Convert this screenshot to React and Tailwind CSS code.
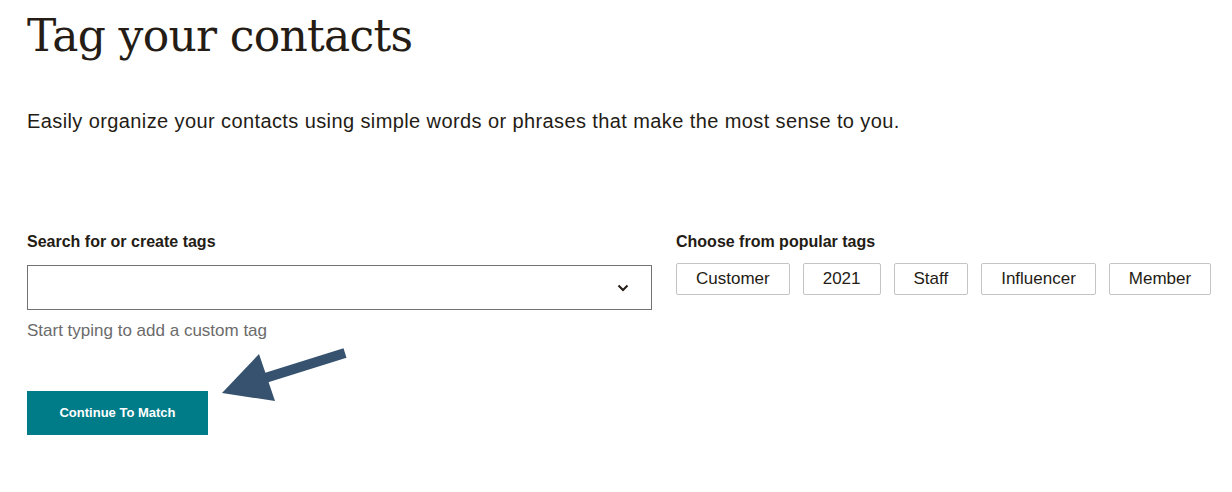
import React from 'react';

const tags = ['Customer', '2021', 'Staff', 'Influencer', 'Member'];

const ArrowNote = () => (
  <svg className="absolute left-0 top-0 pointer-events-none" width="400" height="450" viewBox="0 0 400 450">
    <line x1="345" y1="353" x2="262" y2="379" stroke="#36526e" strokeWidth="10" />
    <polygon points="222,393 259,354 275,401" fill="#36526e" />
  </svg>
);

export default function App() {
  return (
    <div className="relative w-[1232px] h-[492px] bg-white text-[#241c15] px-[27px] pt-[6px] font-['Liberation_Sans',sans-serif]">
      <h1 className="font-['DejaVu_Serif',serif] text-[44px] leading-[60px] tracking-[-0.7px]">Tag your contacts</h1>
      <p className="mt-[41px] text-[20px] leading-[28px] tracking-[0.4px]">
        Easily organize your contacts using simple words or phrases that make the most sense to you.
      </p>

      <div className="mt-[97px] flex gap-6">
        <div className="w-[625px] shrink-0">
          <label className="block text-[16px] font-bold leading-[20px]">Search for or create tags</label>
          <div className="mt-[13px] h-[45px] border border-[#727272] flex items-center justify-end pr-[22px]">
            <svg width="12" height="8" viewBox="0 0 12 8" fill="none">
              <path d="M1.5 1.5 L6 6 L10.5 1.5" stroke="#241c15" strokeWidth="2" />
            </svg>
          </div>
          <p className="mt-[10px] text-[17px] leading-[22px] text-[#6b6b6b]">Start typing to add a custom tag</p>
          <button className="mt-[49px] w-[181px] h-[44px] bg-[#007c89] text-white text-[13px] font-bold">
            Continue To Match
          </button>
        </div>

        <div className="shrink-0">
          <label className="block text-[16px] font-bold leading-[20px]">Choose from popular tags</label>
          <div className="mt-[11px] flex gap-[13px]">
            {tags.map((t) => (
              <button
                key={t}
                className="h-[32px] px-[19px] border border-[#c4c4c4] rounded-[2px] text-[17px] text-[#241c15]"
              >
                {t}
              </button>
            ))}
          </div>
        </div>
      </div>

      <ArrowNote />
    </div>
  );
}
